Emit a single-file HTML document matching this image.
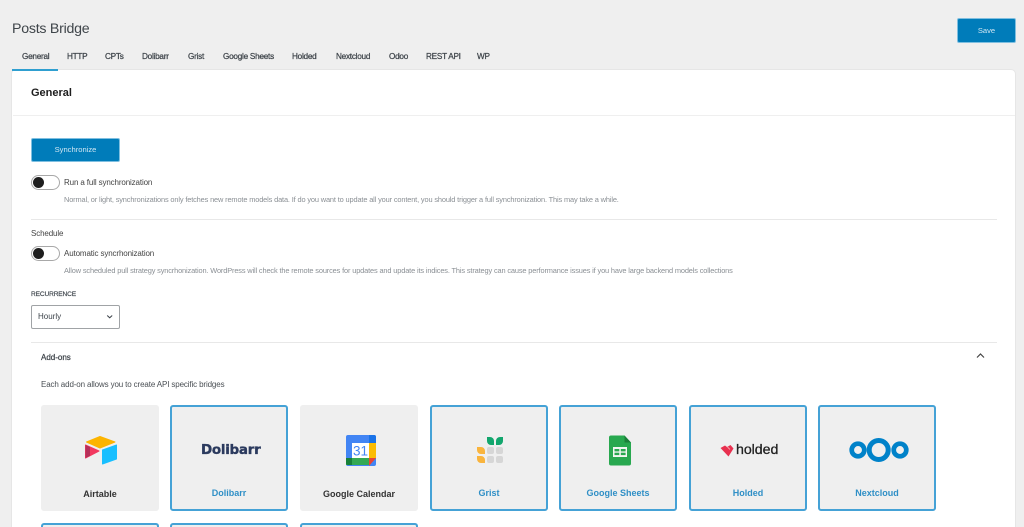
<!DOCTYPE html>
<html><head><meta charset="utf-8"><style>
html,body{margin:0;padding:0;width:1024px;height:527px;overflow:hidden;background:#efefef}
body{position:relative;font-family:"Liberation Sans",Arial,sans-serif;color:#3c434a}
.t{position:absolute;white-space:nowrap;line-height:1}
.tab{top:52px;font-size:8.2px;color:#3f454b;line-height:9px;-webkit-text-stroke:.25px #3f454b;letter-spacing:-.25px}
.panel{position:absolute;left:12px;top:70px;width:1003px;height:457px;background:#fff;border-radius:4px 4px 0 0;box-shadow:0 0 0 1px #e6e6e6}
.btn{position:absolute;background:#007cba;border:1px solid #7fbfe0;box-sizing:border-box;border-radius:2px;color:#cfe6f3;font-size:7.6px;text-align:center}
.hr{position:absolute;height:1px;background:#e8e8e8}
.tog{position:absolute;left:31px;width:29px;height:15px;box-sizing:border-box;border:1px solid #a8a8a8;border-radius:8px;background:#fff}
.tog i{position:absolute;left:1px;top:1px;width:11px;height:11px;border-radius:50%;background:#1e1e1e}
.lab{font-size:8px;color:#444;letter-spacing:-.13px}
.help{font-size:7.4px;color:#8a8f94;letter-spacing:-.14px}
.card{position:absolute;top:405px;width:118px;height:106px;box-sizing:border-box;background:#efefef;border-radius:3px}
.card.on{border:2px solid #45a2d6}
.card span{position:absolute;left:0;right:0;text-align:center;font-size:9px;font-weight:bold;line-height:10px}
.card.on span{top:81px;color:#2f8fc6}
.card.off span{top:84px;color:#333}
.card.cut{top:523px;height:4px;border-bottom:0;border-radius:3px 3px 0 0}
svg{position:absolute;overflow:visible}
</style></head><body>
<div class="t" style="left:12px;top:22px;font-size:14.2px;color:#3f454a;letter-spacing:-.25px">Posts Bridge</div>
<div class="btn" style="left:957px;top:18px;width:59px;height:25px;line-height:23px">Save</div>

<div class="t tab" style="left:22px">General</div>
<div class="t tab" style="left:67px">HTTP</div>
<div class="t tab" style="left:105px">CPTs</div>
<div class="t tab" style="left:142px">Dolibarr</div>
<div class="t tab" style="left:188px">Grist</div>
<div class="t tab" style="left:223px">Google Sheets</div>
<div class="t tab" style="left:292px">Holded</div>
<div class="t tab" style="left:336px">Nextcloud</div>
<div class="t tab" style="left:389px">Odoo</div>
<div class="t tab" style="left:426px">REST API</div>
<div class="t tab" style="left:477px">WP</div>

<div class="panel"></div>
<div style="position:absolute;left:12px;top:69px;width:46px;height:2px;background:#2f9fd0"></div>
<div class="t" style="left:31px;top:88px;font-size:11px;font-weight:bold;color:#1e1e1e">General</div>
<div class="hr" style="left:13px;top:115px;width:1002px;background:#efefef"></div>

<div class="btn" style="left:31px;top:138px;width:89px;height:24px;line-height:22px">Synchronize</div>
<div class="tog" style="top:175px"><i></i></div>
<div class="t lab" style="left:64px;top:179px">Run a full synchronization</div>
<div class="t help" style="left:64px;top:196px">Normal, or light, synchronizations only fetches new remote models data. If do you want to update all your content, you should trigger a full synchronization. This may take a while.</div>
<div class="hr" style="left:31px;top:219px;width:966px"></div>
<div class="t lab" style="left:31px;top:230px">Schedule</div>
<div class="tog" style="top:246px"><i></i></div>
<div class="t lab" style="left:64px;top:250px">Automatic syncrhonization</div>
<div class="t help" style="left:64px;top:267px">Allow scheduled pull strategy syncrhonization. WordPress will check the remote sources for updates and update its indices. This strategy can cause performance issues if you have large backend models collections</div>
<div class="t" style="left:31px;top:292px;font-size:6.6px;color:#3c434a;-webkit-text-stroke:.15px #3c434a;letter-spacing:-.15px">RECURRENCE</div>
<div style="position:absolute;left:31px;top:305px;width:89px;height:24px;box-sizing:border-box;border:1px solid #a0a3a6;border-radius:2px;background:#fff"></div>
<div class="t" style="left:38px;top:313px;font-size:8px;color:#3c434a">Hourly</div>
<svg style="left:106px;top:314px" width="8" height="6"><path d="M1.2 1.5 L3.7 3.8 L6.2 1.5" fill="none" stroke="#3c434a" stroke-width="1"/></svg>

<div class="hr" style="left:31px;top:342px;width:966px"></div>
<div class="t" style="left:41px;top:354px;font-size:8px;color:#3f454b;-webkit-text-stroke:.25px #3f454b">Add-ons</div>
<svg style="left:976px;top:352px" width="10" height="8"><path d="M1 5.500 L4.500 2 L8 5.500" fill="none" stroke="#444" stroke-width="1.200"/></svg>
<div class="t" style="left:41px;top:381px;font-size:8px;color:#4a4f54;letter-spacing:-.13px">Each add-on allows you to create API specific bridges</div>

<div class="card off" style="left:41px"><span>Airtable</span></div>
<svg style="left:85px;top:436px" width="33" height="29" viewBox="0 0 33 29">
<path d="M15 .5 L30 6 L15 12 L1.500 6z" fill="#fcb400" stroke="#fcb400" stroke-linejoin="round"/>
<path d="M17.500 14 L31.500 9 V23 L17.500 28z" fill="#18bfff" stroke="#18bfff" stroke-linejoin="round"/>
<path d="M.5 9 L14 15 L.5 22z" fill="#f2395f" stroke="#f2395f" stroke-linejoin="round"/>
<path d="M.5 9 L5 11 V19.800 L.5 22z" fill="#b5305a"/>
</svg>

<div class="card on" style="left:170px"><span>Dolibarr</span></div>
<div class="t" style="left:201px;top:444px;width:60px;font-family:'DejaVu Sans',sans-serif;font-size:13.500px;font-weight:bold;color:#2b3a5e;letter-spacing:-.3px;-webkit-text-stroke:.35px #2b3a5e">Dolibarr</div>

<div class="card off" style="left:300px"><span>Google Calendar</span></div>
<svg style="left:346px;top:435px" width="30" height="31" viewBox="0 0 30 31">
<rect width="30" height="31" rx="2" fill="#4285f4"/>
<path d="M23 0h5a2 2 0 0 1 2 2v6h-7z" fill="#1a73e8"/>
<rect x="23" y="8" width="7" height="15" fill="#fbbc04"/>
<rect x="0" y="23" width="23" height="7" fill="#34a853"/>
<path d="M23 23h7l-7 8z" fill="#ea4335"/>
<path d="M0 23h6v7H2a2 2 0 0 1-2-2z" fill="#188038"/>
<rect x="6" y="8" width="17" height="15" fill="#fff"/>
<text x="14.500" y="20.500" text-anchor="middle" font-family="Liberation Sans,sans-serif" font-size="13.500" fill="#4285f4">31</text>
</svg>

<div class="card on" style="left:430px"><span>Grist</span></div>
<svg style="left:477px;top:436px" width="28" height="29" viewBox="0 0 28 29">
<path d="M10 1h3a4 4 0 0 1 4 4v4h-3a4 4 0 0 1-4-4z" fill="#12a66d"/>
<path d="M26 1h-3a4 4 0 0 0-4 4v4h3a4 4 0 0 0 4-4z" fill="#12a66d"/>
<g fill="#d6d6d6"><rect x="10" y="11" width="7" height="7" rx="2"/><rect x="19" y="11" width="7" height="7" rx="2"/><rect x="10" y="20" width="7" height="7" rx="2"/><rect x="19" y="20" width="7" height="7" rx="2"/></g>
<path d="M0 11h4a4 4 0 0 1 4 4v3H4a4 4 0 0 1-4-4zM0 20h4a4 4 0 0 1 4 4v3H4a4 4 0 0 1-4-4z" fill="#f9b43d"/>
</svg>

<div class="card on" style="left:559px"><span>Google Sheets</span></div>
<svg style="left:609px;top:435px" width="23" height="31" viewBox="0 0 23 31">
<path d="M2 .5h13.500L22 7.500V28.500a2 2 0 0 1-2 2H2a2 2 0 0 1-2-2v-26a2 2 0 0 1 2-2z" fill="#28a84f"/>
<path d="M15.500 .5V7.500H22z" fill="#1b7f3a"/>
<rect x="4" y="12" width="14" height="10" fill="#f2f6f2"/>
<g fill="#28a84f"><rect x="5.500" y="14" width="4.800" height="2.400"/><rect x="11.800" y="14" width="4.800" height="2.400"/><rect x="5.500" y="17.700" width="4.800" height="2.400"/><rect x="11.800" y="17.700" width="4.800" height="2.400"/></g>
</svg>

<div class="card on" style="left:689px"><span>Holded</span></div>
<svg style="left:720px;top:444px" width="14" height="13" viewBox="0 0 14 13">
<path d="M.5 4 5 1.500 7 3 10.500 1 13.500 4.500 8.500 12.500z" fill="#e8304f"/>
<path d="M7.500 3 10 5.500" stroke="#f7a0a8" stroke-width="1" fill="none"/>
</svg>
<div class="t" style="left:736px;top:443px;font-size:14.200px;color:#222;letter-spacing:-.05px;-webkit-text-stroke:.3px #222">holded</div>

<div class="card on" style="left:818px"><span>Nextcloud</span></div>
<svg style="left:848px;top:435px" width="62" height="30" viewBox="0 0 62 30">
<g fill="none" stroke="#0082c9"><circle cx="30.700" cy="15" r="9.500" stroke-width="5"/><circle cx="10" cy="15" r="6.300" stroke-width="4.700"/><circle cx="52" cy="15" r="6.300" stroke-width="4.700"/></g>
</svg>

<div class="card on cut" style="left:41px"></div>
<div class="card on cut" style="left:170px"></div>
<div class="card on cut" style="left:300px"></div>
</body></html>
